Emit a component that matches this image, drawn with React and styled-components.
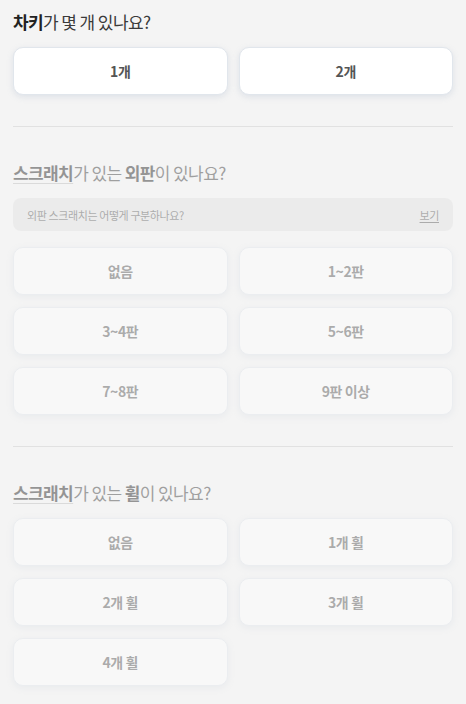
import React from 'react';
import styled, { createGlobalStyle } from 'styled-components';

const GlobalStyle = createGlobalStyle`
  html, body {
    margin: 0;
    padding: 0;
    background: #f4f4f4;
  }
  body {
    font-family: 'Noto Sans CJK KR', 'Noto Sans', sans-serif;
    color: #222;
  }
`;

const Page = styled.div`
  padding: 9px 13px 20px;
  display: flex;
  flex-direction: column;
`;

const Section = styled.section`
  display: flex;
  flex-direction: column;
  opacity: ${(p) => (p.$dim ? 0.45 : 1)};
`;

const Title = styled.h2`
  margin: 0 0 12px;
  font-size: 17px;
  line-height: 26px;
  font-weight: 400;
  letter-spacing: -0.6px;
  color: #3a3a3a;

  b {
    font-weight: 700;
    color: #222;
  }
`;

const Underlined = styled.b`
  text-decoration: underline;
  text-decoration-color: #bbb;
  text-underline-offset: 3px;
`;

const Info = styled.div`
  display: flex;
  align-items: center;
  justify-content: space-between;
  height: 33px;
  padding: 0 14px;
  margin-bottom: 16px;
  border-radius: 8px;
  background: #e2e2e2;
  font-size: 11px;
  letter-spacing: -0.4px;
  color: #555;
`;

const InfoLink = styled.span`
  text-decoration: underline;
  text-underline-offset: 2px;
`;

const Grid = styled.div`
  display: grid;
  grid-template-columns: 1fr 1fr;
  gap: 12px 11px;
`;

const Option = styled.button`
  height: 48px;
  border: 1px solid #e1e6ec;
  border-radius: 10px;
  background: #fff;
  box-shadow: 0 2px 6px rgba(140, 160, 185, 0.22);
  font-family: inherit;
  font-size: 14px;
  font-weight: 700;
  letter-spacing: -0.4px;
  color: #555;
  cursor: pointer;
`;

const Divider = styled.hr`
  margin: 31px 0 33px;
  border: 0;
  border-top: 1px solid #e1e1e1;
`;

const panels = ['없음', '1~2판', '3~4판', '5~6판', '7~8판', '9판 이상'];
const wheels = ['없음', '1개 휠', '2개 휠', '3개 휠', '4개 휠'];

export default function App() {
  return (
    <>
      <GlobalStyle />
      <Page>
        <Section>
          <Title>
            <b>차키</b>가 몇 개 있나요?
          </Title>
          <Grid>
            <Option>1개</Option>
            <Option>2개</Option>
          </Grid>
        </Section>

        <Divider />

        <Section $dim>
          <Title>
            <Underlined>스크래치</Underlined>가 있는 <b>외판</b>이 있나요?
          </Title>
          <Info>
            <span>외판 스크래치는 어떻게 구분하나요?</span>
            <InfoLink>보기</InfoLink>
          </Info>
          <Grid>
            {panels.map((p) => (
              <Option key={p}>{p}</Option>
            ))}
          </Grid>
        </Section>

        <Divider />

        <Section $dim>
          <Title>
            <Underlined>스크래치</Underlined>가 있는 <b>휠</b>이 있나요?
          </Title>
          <Grid>
            {wheels.map((w) => (
              <Option key={w}>{w}</Option>
            ))}
          </Grid>
        </Section>
      </Page>
    </>
  );
}
